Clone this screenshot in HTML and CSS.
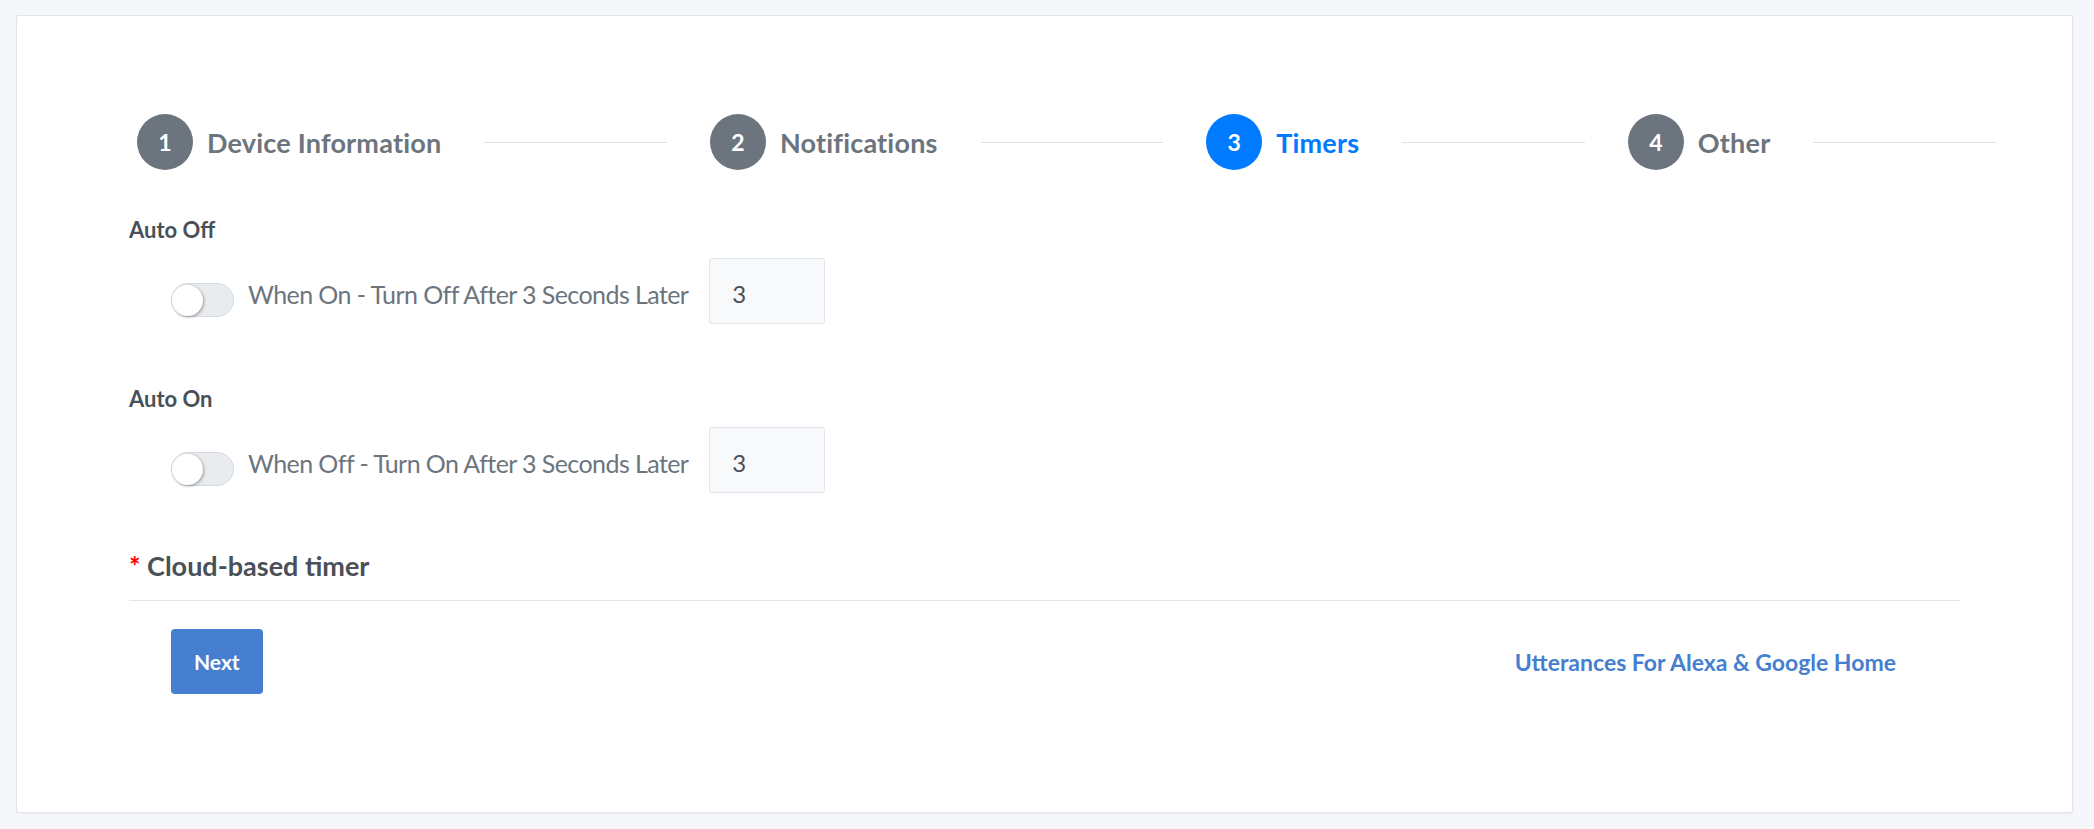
FILE: index.html
```html
<!DOCTYPE html>
<html lang="en">
<head>
<meta charset="utf-8">
<title>Timers</title>
<link rel="stylesheet" href="styles.css">
</head>
<body>
<div class="card">
  <div class="stepper">
    <div class="step"><span class="circle">1</span><span class="label">Device Information</span><span class="line"></span></div>
    <div class="step"><span class="circle">2</span><span class="label">Notifications</span><span class="line"></span></div>
    <div class="step active"><span class="circle">3</span><span class="label">Timers</span><span class="line"></span></div>
    <div class="step"><span class="circle">4</span><span class="label">Other</span><span class="line"></span></div>
  </div>

  <div class="group">
    <div class="group-label">Auto Off</div>
    <div class="row">
      <span class="switch"><span class="knob"></span></span>
      <span class="switch-text">When On - Turn Off After 3 Seconds Later</span>
      <input class="num" type="text" value="3">
    </div>
  </div>

  <div class="group">
    <div class="group-label">Auto On</div>
    <div class="row">
      <span class="switch"><span class="knob"></span></span>
      <span class="switch-text">When Off - Turn On After 3 Seconds Later</span>
      <input class="num" type="text" value="3">
    </div>
  </div>

  <div class="section-title"><span class="req">*</span> Cloud-based timer</div>

  <div class="actions">
    <button class="btn" type="button">Next</button>
    <a class="link" href="#">Utterances For Alexa &amp; Google Home</a>
  </div>
</div>
</body>
</html>
```
FILE: styles.css
```css
html, body {
  margin: 0;
  padding: 0;
}
body {
  background: #f5f7fb;
  font-family: Lato, "Liberation Sans", sans-serif;
}
.card {
  margin: 15px 21px 16px 16px;
  background: #fff;
  border: 1px solid rgba(0, 40, 100, 0.12);
  border-radius: 3px;
  box-shadow: 0 1px 2px rgba(0, 0, 0, 0.05);
  padding: 98px 112px 118px 112px;
}
.stepper {
  display: flex;
  align-items: center;
  height: 56px;
  margin: 0 -79px 0 8px;
}
.step {
  display: flex;
  align-items: center;
  flex: 1 1 auto;
}
.circle {
  flex: none;
  width: 56px;
  height: 56px;
  border-radius: 50%;
  background: #6c757d;
  color: #fff;
  font-size: 23px;
  font-weight: 700;
  display: flex;
  align-items: center;
  justify-content: center;
}
.label {
  margin-left: 14px;
  font-size: 27px;
  letter-spacing: 0.2px;
  font-weight: 700;
  color: #6c757d;
  white-space: nowrap;
}
.line {
  flex: 1 1 0;
  height: 1px;
  margin: 0 43px;
  background: #e0e0e0;
}
.step.active .circle {
  background: #007bff;
}
.step.active .label {
  color: #007bff;
}
.group {
  margin-top: 45px;
}
.group + .group {
  margin-top: 60px;
}
.group-label {
  font-size: 22px;
  line-height: 30px;
  font-weight: 700;
  color: #495057;
}
.row {
  display: flex;
  align-items: flex-start;
  height: 65px;
  margin-top: 14px;
  padding-left: 42px;
}
.switch {
  flex: none;
  box-sizing: border-box;
  display: flex;
  align-items: center;
  width: 63px;
  height: 34px;
  margin-top: 24px;
  border: 1px solid #d6dae0;
  border-radius: 17px;
  background: #e9ecef;
}
.knob {
  width: 31px;
  height: 31px;
  border-radius: 50%;
  background: #fff;
  box-shadow: 1px 1px 3px rgba(0, 0, 0, 0.35);
}
.switch-text {
  margin-left: 14px;
  margin-top: 18px;
  font-size: 25px;
  letter-spacing: -0.58px;
  line-height: 34px;
  color: #6c757d;
  white-space: nowrap;
}
.num {
  flex: none;
  box-sizing: border-box;
  width: 116px;
  height: 66px;
  margin: -1px 0 0 21px;
  padding: 5px 0 0 22px;
  border: 1px solid #e0e5ec;
  border-radius: 3px;
  background: #f8f9fa;
  color: #495057;
  font-family: Lato, "Liberation Sans", sans-serif;
  font-size: 24px;
  outline: none;
}
.section-title {
  margin-top: 56px;
  padding-bottom: 17px;
  border-bottom: 1px solid #e0e5ec;
  font-size: 27px;
  line-height: 34px;
  font-weight: 700;
  color: #495057;
}
.req {
  color: #ff0000;
}
.actions {
  display: flex;
  align-items: center;
  justify-content: space-between;
  margin-top: 28px;
  padding: 0 64px 0 42px;
}
.btn {
  height: 65px;
  padding: 0 23px;
  border: none;
  border-radius: 4px;
  background: #467fcf;
  color: #fff;
  font-family: Lato, "Liberation Sans", sans-serif;
  font-size: 21px;
  font-weight: 700;
}
.link {
  font-size: 23px;
  font-weight: 700;
  color: #467fcf;
  text-decoration: none;
}
```
